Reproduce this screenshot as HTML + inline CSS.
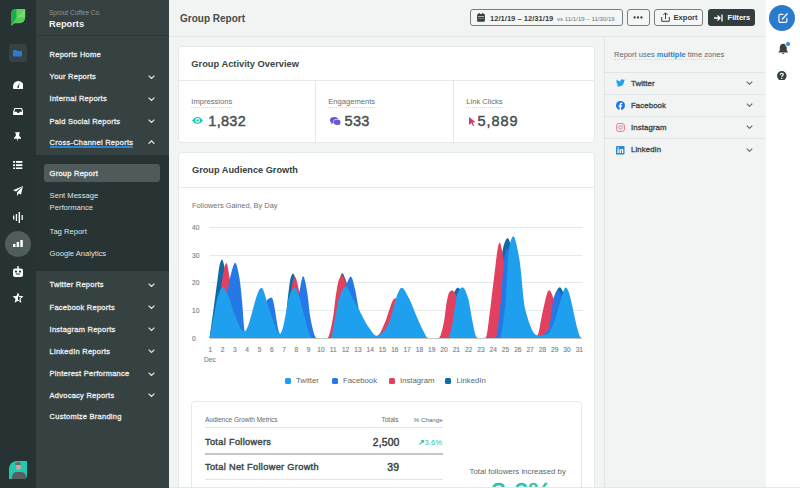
<!DOCTYPE html>
<html><head><meta charset="utf-8">
<style>
*{margin:0;padding:0;box-sizing:border-box}
html,body{width:800px;height:488px;overflow:hidden;background:#f2f3f3;font-family:"Liberation Sans",sans-serif;}
.a{position:absolute;white-space:nowrap}
#rail{position:absolute;left:0;top:0;width:36px;height:488px;background:#273232}
#nav{position:absolute;left:36px;top:0;width:133px;height:488px;background:#364141}
#sub{position:absolute;left:36px;top:155px;width:133px;height:116px;background:#283333}
.ni{position:absolute;left:13.6px;color:#e8ecec;font-weight:normal;font-size:7.5px;line-height:10px;letter-spacing:0.25px;-webkit-text-stroke:0.3px #e8ecec}
.si{position:absolute;left:13.6px;color:#dfe4e4;font-size:7.6px;line-height:12px}
.chev{position:absolute;left:111.5px;width:7px;height:4.4px}
#main{position:absolute;left:169px;top:0;width:436px;height:488px;background:#f2f3f3}
#hdr{position:absolute;left:0;top:0;width:436px;height:37px;border-bottom:1px solid #e3e6e6}
.num{top:65.6px;font-size:14.5px;font-weight:normal;letter-spacing:0.3px;color:#465151;-webkit-text-stroke:0.45px #465151}
.card{position:absolute;background:#fff;border:1px solid #e6e9e9;border-radius:4px}
#rp{position:absolute;left:604px;top:36px;width:161px;height:452px;background:#f2f3f3;border-left:1px solid #e1e4e4}
#rr{position:absolute;left:765px;top:0;width:35px;height:488px;background:#fff;border-left:1px solid #f3f4f4}
.btn{position:absolute;z-index:0;top:8.8px;height:17.5px;border:1px solid #758080;border-radius:3px;background:#f5f6f6}
.rprow{position:absolute;left:0;width:160px;height:22px;border-top:1px solid #e1e4e4}
.rplbl{position:absolute;left:26px;top:5.6px;font-weight:normal;font-size:7.8px;letter-spacing:0.1px;color:#434e4e;-webkit-text-stroke:0.35px #434e4e}
.lg{position:absolute;top:377.5px;width:6px;height:6px;border-radius:1.5px}
.lgt{position:absolute;top:375.7px;font-size:7.75px;color:#5d6868}
</style></head><body>
<div id="rail">
  <!-- logo -->
  <svg class="a" style="left:0;top:0" width="36" height="36" viewBox="0 0 36 36">
    <path d="M11.1 25.9 L11.1 14.3 Q11.1 9.1 16.3 9.1 L25.1 9.1 L25.1 17.5 Q25.1 23.2 19.4 23.2 L14.6 23.2 Z" fill="#5acb5a"/>
    <path d="M11.1 25.9 L11.1 14.3 Q11.1 9.1 16.3 9.1 L16.6 9.1 L16.6 17.6 Z" fill="#1aab4d"/>
    <path d="M16.6 9.1 L25.1 9.1 L16.6 17.6 Z" fill="#5fcf5e"/>
    <path d="M25.1 9.1 L25.1 17.6 L16.6 17.6 Z" fill="#74da6c"/>
  </svg>
  <!-- folder button -->
  <div class="a" style="left:9px;top:44px;width:18px;height:18px;border-radius:3px;background:#364141"></div>
  <svg class="a" style="left:13px;top:50px" width="9" height="6.5" viewBox="0 0 10 7.2"><path d="M0 1 Q0 0 1 0 H3.8 L4.8 1 H9 Q10 1 10 2 V6.2 Q10 7.2 9 7.2 H1 Q0 7.2 0 6.2Z" fill="#2a7bd6"/></svg>
  <!-- gauge -->
  <svg class="a" style="left:12.8px;top:80.8px" width="10.5" height="8" viewBox="0 0 12 9"><path d="M6 0 A6 6 0 0 1 12 6 V8 Q12 9 11 9 H1 Q0 9 0 8 V6 A6 6 0 0 1 6 0Z" fill="#fff"/><path d="M7.8 1.5 L6.6 6.8 L5.2 6.5Z" fill="#273232"/><circle cx="5.9" cy="6.9" r="1" fill="#273232"/></svg>
  <!-- inbox -->
  <svg class="a" style="left:12.8px;top:107.5px" width="10.4" height="7.6" viewBox="0 0 12 9"><path d="M1.5 0 H10.5 L12 4.5 V8 Q12 9 11 9 H1 Q0 9 0 8 V4.5Z" fill="#fff"/><path d="M2.3 1.3 H9.7 L10.6 4.3 H7.8 Q7.5 5.8 6 5.8 Q4.5 5.8 4.2 4.3 H1.4Z" fill="#273232"/></svg>
  <!-- pin -->
  <svg class="a" style="left:14.4px;top:132.4px" width="7" height="10" viewBox="0 0 9 12"><path d="M1.5 0 H7.5 V1.5 H6.4 L6.8 4.8 L9 7 V8.3 H5.1 L4.5 12 L3.9 8.3 H0 V7 L2.2 4.8 L2.6 1.5 H1.5Z" fill="#fff"/></svg>
  <!-- list -->
  <svg class="a" style="left:13px;top:160.5px" width="9.5" height="8.3" viewBox="0 0 10 9"><rect x="0" y="0" width="2" height="2" fill="#fff"/><rect x="3" y="0" width="7" height="2" fill="#fff"/><rect x="0" y="3.5" width="2" height="2" fill="#fff"/><rect x="3" y="3.5" width="7" height="2" fill="#fff"/><rect x="0" y="7" width="2" height="2" fill="#fff"/><rect x="3" y="7" width="7" height="2" fill="#fff"/></svg>
  <!-- send -->
  <svg class="a" style="left:13px;top:186px" width="10" height="10" viewBox="0 0 10 10"><path d="M10 0 L0 4.3 L3 5.6 L10 0 L4 6.4 V10 L5.8 7.6 L8 8.6Z" fill="#fff"/></svg>
  <!-- waveform -->
  <svg class="a" style="left:13px;top:212px" width="10" height="11" viewBox="0 0 10 11"><rect x="0" y="3.5" width="1.3" height="4" fill="#fff"/><rect x="2.8" y="2" width="1.3" height="7" fill="#fff"/><rect x="5.6" y="0" width="1.4" height="11" fill="#fff"/><rect x="8.5" y="3" width="1.3" height="5" fill="#fff"/></svg>
  <!-- bars circle -->
  <div class="a" style="left:5px;top:231px;width:26px;height:26px;border-radius:13px;background:#515d5d"></div>
  <svg class="a" style="left:13px;top:240px" width="10" height="7" viewBox="0 0 10 7"><rect x="0" y="4" width="2.5" height="3" fill="#fff"/><rect x="3.6" y="2" width="2.5" height="5" fill="#fff"/><rect x="7.3" y="0" width="2.5" height="7" fill="#fff"/></svg>
  <!-- bot -->
  <svg class="a" style="left:13px;top:266px" width="10" height="11" viewBox="0 0 10 11"><rect x="4.3" y="0" width="1.4" height="3" fill="#fff"/><rect x="0" y="2.5" width="10" height="8.5" rx="2" fill="#fff"/><circle cx="3" cy="5.6" r="1.1" fill="#273232"/><circle cx="7" cy="5.6" r="1.1" fill="#273232"/><path d="M2.8 8 H7.2" stroke="#273232" stroke-width="1"/></svg>
  <!-- star -->
  <svg class="a" style="left:12px;top:292px" width="12" height="12" viewBox="0 0 12 12"><path d="M6 0.5 L7.6 4 L11.5 4.3 L8.5 6.9 L9.4 10.8 L6 8.8 L2.6 10.8 L3.5 6.9 L0.5 4.3 L4.4 4Z" fill="#fff"/><path d="M6 3 L6.9 5.1 L9 5.3 L7.4 6.7 L7.9 8.9 L6 7.7Z" fill="#273232"/></svg>
  <!-- avatar -->
  <div class="a" style="left:9px;top:461px;width:18px;height:18px;background:#22c9b2;border-radius:8px 0 4px 0;overflow:hidden">
    <div class="a" style="left:2.5px;top:10.5px;width:14px;height:10px;border-radius:5px 5px 0 0;background:#5a5f5d"></div>
    <div class="a" style="left:6.6px;top:1.6px;width:5.6px;height:7px;border-radius:2.8px;background:#c3aaa0"></div>
    <div class="a" style="left:6.4px;top:1.2px;width:6px;height:2.4px;border-radius:3px 3px 0 0;background:#6d6a66"></div>
  </div>
</div>

<div id="nav">
  <div class="a" style="left:13px;top:8.5px;font-size:6.5px;color:#8d9797">Sprout Coffee Co.</div>
  <div class="a" style="left:13px;top:18.5px;font-size:9.3px;font-weight:bold;color:#f4f6f6">Reports</div>
  <div class="a" style="left:0;top:34.5px;width:133px;height:1px;background:#2d3838"></div>
  <div class="ni" style="top:49.6px">Reports Home</div>
  <div class="ni" style="top:72.2px">Your Reports</div>
  <div class="ni" style="top:94.4px">Internal Reports</div>
  <div class="ni" style="top:116.6px">Paid Social Reports</div>
  <div class="ni" style="top:137.6px">Cross-Channel Reports</div>
  <div class="a" style="left:13.6px;top:146.4px;width:83px;height:1.4px;background:#2f82cc"></div>
  <svg class="chev" style="top:74.7px" viewBox="0 0 7 4.4"><path d="M0.6 0.6 L3.5 3.5 L6.4 0.6" stroke="#e3e8e8" fill="none" stroke-width="1.2"/></svg>
  <svg class="chev" style="top:96.8px" viewBox="0 0 7 4.4"><path d="M0.6 0.6 L3.5 3.5 L6.4 0.6" stroke="#e3e8e8" fill="none" stroke-width="1.2"/></svg>
  <svg class="chev" style="top:119px" viewBox="0 0 7 4.4"><path d="M0.6 0.6 L3.5 3.5 L6.4 0.6" stroke="#e3e8e8" fill="none" stroke-width="1.2"/></svg>
  <svg class="chev" style="top:140px" viewBox="0 0 7 4.4"><path d="M0.6 3.8 L3.5 0.9 L6.4 3.8" stroke="#e3e8e8" fill="none" stroke-width="1.2"/></svg>

  <div class="ni" style="top:280.4px">Twitter Reports</div>
  <div class="ni" style="top:302.5px">Facebook Reports</div>
  <div class="ni" style="top:324.8px">Instagram Reports</div>
  <div class="ni" style="top:347px">LinkedIn Reports</div>
  <div class="ni" style="top:369.2px">Pinterest Performance</div>
  <div class="ni" style="top:390.6px">Advocacy Reports</div>
  <div class="ni" style="top:411.8px">Customize Branding</div>
  <svg class="chev" style="top:282.7px" viewBox="0 0 7 4.4"><path d="M0.6 0.6 L3.5 3.5 L6.4 0.6" stroke="#e3e8e8" fill="none" stroke-width="1.2"/></svg>
  <svg class="chev" style="top:304.9px" viewBox="0 0 7 4.4"><path d="M0.6 0.6 L3.5 3.5 L6.4 0.6" stroke="#e3e8e8" fill="none" stroke-width="1.2"/></svg>
  <svg class="chev" style="top:327.2px" viewBox="0 0 7 4.4"><path d="M0.6 0.6 L3.5 3.5 L6.4 0.6" stroke="#e3e8e8" fill="none" stroke-width="1.2"/></svg>
  <svg class="chev" style="top:349.4px" viewBox="0 0 7 4.4"><path d="M0.6 0.6 L3.5 3.5 L6.4 0.6" stroke="#e3e8e8" fill="none" stroke-width="1.2"/></svg>
  <svg class="chev" style="top:371.6px" viewBox="0 0 7 4.4"><path d="M0.6 0.6 L3.5 3.5 L6.4 0.6" stroke="#e3e8e8" fill="none" stroke-width="1.2"/></svg>
  <svg class="chev" style="top:393px" viewBox="0 0 7 4.4"><path d="M0.6 0.6 L3.5 3.5 L6.4 0.6" stroke="#e3e8e8" fill="none" stroke-width="1.2"/></svg>
</div>
<div id="sub">
  <div class="a" style="left:8.4px;top:9.3px;width:115.5px;height:17.3px;border-radius:3px;background:#4f5b5b"></div>
  <div class="ni" style="top:13.6px;color:#fff">Group Report</div>
  <div class="si" style="top:35.4px">Sent Message</div>
  <div class="si" style="top:47.4px">Performance</div>
  <div class="si" style="top:70.8px">Tag Report</div>
  <div class="si" style="top:92.8px">Google Analytics</div>
</div>

<div id="main">
  <div id="hdr">
    <div class="a" style="left:11px;top:12.9px;font-size:10px;font-weight:bold;color:#434d4d">Group Report</div>
  </div>
  <!-- card 1 -->
  <div class="card" style="left:9px;top:46px;width:417px;height:97px">
    <div class="a" style="left:12.3px;top:12px;font-size:9.3px;font-weight:bold;color:#3a4545">Group Activity Overview</div>
    <div class="a" style="left:0;top:33px;width:415px;height:1px;background:#e6e9e9"></div>
    <div class="a" style="left:136px;top:34px;width:1px;height:61px;background:#e6e9e9"></div>
    <div class="a" style="left:274px;top:34px;width:1px;height:61px;background:#e6e9e9"></div>
    <div class="a" style="left:12.3px;top:50px;font-size:7.6px;color:#667070;border-bottom:1px dotted #d3d8d8;padding-bottom:1px">Impressions</div>
    <div class="a" style="left:149.3px;top:50px;font-size:7.6px;color:#667070;border-bottom:1px dotted #d3d8d8;padding-bottom:1px">Engagements</div>
    <div class="a" style="left:287.3px;top:50px;font-size:7.6px;color:#667070;border-bottom:1px dotted #d3d8d8;padding-bottom:1px">Link Clicks</div>
    <svg class="a" style="left:13.3px;top:69.2px" width="11" height="8.8" viewBox="0 0 10 8"><path d="M0 4 Q5 -2.6 10 4 Q5 10.6 0 4Z" fill="#27c1b3"/><circle cx="5" cy="4" r="2.1" fill="#fff"/><circle cx="5" cy="4" r="1.1" fill="#27c1b3"/></svg>
    <div class="a num" style="left:29.3px">1,832</div>
    <svg class="a" style="left:151px;top:70.2px" width="10.8" height="8.5" viewBox="0 0 11 8.5"><ellipse cx="4.2" cy="3.2" rx="4.2" ry="3.2" fill="#6b58d3"/><path d="M1 5.5 L0.8 7 L2.8 6Z" fill="#6b58d3"/><ellipse cx="7.2" cy="5" rx="3.9" ry="3" fill="#fff"/><ellipse cx="7.2" cy="5.2" rx="3.5" ry="2.8" fill="#6b58d3"/><path d="M9.5 7 L10.3 8.4 L8.2 7.6Z" fill="#6b58d3"/></svg>
    <div class="a num" style="left:165.6px">533</div>
    <svg class="a" style="left:289.5px;top:69.5px" width="6.5" height="9.5" viewBox="0 0 7 10"><path d="M0 0 L7 5.5 L4 5.8 L5.5 9.3 L4.3 9.8 L2.8 6.3 L0 8.5Z" fill="#d9356b"/></svg>
    <div class="a num" style="left:298.6px;letter-spacing:0.9px">5,889</div>
  </div>
  <!-- card 2 -->
  <div class="card" style="left:9px;top:152px;width:417px;height:360px">
    <div class="a" style="left:13px;top:12px;font-size:9.2px;font-weight:bold;color:#364141">Group Audience Growth</div>
    <div class="a" style="left:0;top:34px;width:415px;height:1px;background:#e6e9e9"></div>
    <div class="a" style="left:13px;top:48.4px;font-size:7.4px;color:#6a7474">Followers Gained, By Day</div>
  </div>
</div>

<!-- chart svg in page coords -->
<svg class="a" style="left:0;top:0" width="800" height="488" viewBox="0 0 800 488">
  <g stroke="#e6e9e9" stroke-width="1">
    <line x1="209.5" y1="227.5" x2="582.5" y2="227.5"/>
    <line x1="209.5" y1="255.5" x2="582.5" y2="255.5"/>
    <line x1="209.5" y1="282.5" x2="582.5" y2="282.5"/>
    <line x1="209.5" y1="310.5" x2="582.5" y2="310.5"/>
  </g>
  <g font-family="Liberation Sans" font-size="6.6" fill="#7d8787" stroke="#7d8787" stroke-width="0.15">
    <text x="192" y="230">40</text><text x="192" y="257.8">30</text><text x="192" y="285.3">20</text><text x="192" y="313">10</text><text x="192" y="340.6">0</text>
  </g>
  <line x1="209.5" y1="338.5" x2="582.5" y2="338.5" stroke="#bfc5c5" stroke-width="1"/>
  <path d="M209.5 338.0 L209.5 338.00 L210.5 330.89 L211.5 323.81 L212.5 316.69 L213.5 309.49 L214.5 302.09 L215.5 294.47 L216.5 286.90 L217.5 279.65 L218.5 271.87 L219.5 265.32 L220.5 261.91 L221.5 259.74 L222.5 259.82 L223.5 262.70 L224.5 267.33 L225.5 272.55 L226.5 277.56 L227.5 283.88 L228.5 291.40 L229.5 299.64 L230.5 308.14 L231.5 316.40 L232.5 323.96 L233.5 330.34 L234.5 335.06 L235.5 337.65 L236.5 338.00 L237.5 338.00 L238.5 338.00 L239.5 338.00 L240.5 338.00 L241.5 338.00 L242.5 338.00 L243.5 338.00 L244.5 338.00 L245.5 338.00 L246.5 338.00 L247.5 338.00 L248.5 338.00 L249.5 338.00 L250.5 338.00 L251.5 338.00 L252.5 338.00 L253.5 338.00 L254.5 338.00 L255.5 338.00 L256.5 338.00 L257.5 338.00 L258.5 338.00 L259.5 338.00 L260.5 338.00 L261.5 338.00 L262.5 338.00 L263.5 338.00 L264.5 338.00 L265.5 338.00 L266.5 338.00 L267.5 338.00 L268.5 338.00 L269.5 338.00 L270.5 338.00 L271.5 338.00 L272.5 338.00 L273.5 338.00 L274.5 338.00 L275.5 338.00 L276.5 338.00 L277.5 338.00 L278.5 338.00 L279.5 338.00 L280.5 338.00 L281.5 338.00 L282.5 338.00 L283.5 338.00 L284.5 333.82 L285.5 323.74 L286.5 311.41 L287.5 300.49 L288.5 292.16 L289.5 284.11 L290.5 278.29 L291.5 275.58 L292.5 273.84 L293.5 273.69 L294.5 275.62 L295.5 278.98 L296.5 283.00 L297.5 287.31 L298.5 293.76 L299.5 301.91 L300.5 310.89 L301.5 319.81 L302.5 327.81 L303.5 334.00 L304.5 337.52 L305.5 338.00 L306.5 338.00 L307.5 338.00 L308.5 338.00 L309.5 338.00 L310.5 338.00 L311.5 338.00 L312.5 338.00 L313.5 338.00 L314.5 338.00 L315.5 338.00 L316.5 338.00 L317.5 338.00 L318.5 338.00 L319.5 338.00 L320.5 338.00 L321.5 338.00 L322.5 338.00 L323.5 338.00 L324.5 338.00 L325.5 338.00 L326.5 338.00 L327.5 338.00 L328.5 338.00 L329.5 338.00 L330.5 338.00 L331.5 337.47 L332.5 333.63 L333.5 326.95 L334.5 318.50 L335.5 309.30 L336.5 300.43 L337.5 292.91 L338.5 287.30 L339.5 281.61 L340.5 276.57 L341.5 273.45 L342.5 273.20 L343.5 274.58 L344.5 276.89 L345.5 279.62 L346.5 282.57 L347.5 286.91 L348.5 292.52 L349.5 299.03 L350.5 306.06 L351.5 313.21 L352.5 320.12 L353.5 326.41 L354.5 331.69 L355.5 335.59 L356.5 337.72 L357.5 338.00 L358.5 338.00 L359.5 338.00 L360.5 338.00 L361.5 338.00 L362.5 338.00 L363.5 338.00 L364.5 338.00 L365.5 338.00 L366.5 338.00 L367.5 338.00 L368.5 338.00 L369.5 338.00 L370.5 338.00 L371.5 338.00 L372.5 338.00 L373.5 338.00 L374.5 338.00 L375.5 338.00 L376.5 338.00 L377.5 338.00 L378.5 338.00 L379.5 338.00 L380.5 338.00 L381.5 338.00 L382.5 338.00 L383.5 338.00 L384.5 338.00 L385.5 338.00 L386.5 338.00 L387.5 338.00 L388.5 338.00 L389.5 338.00 L390.5 338.00 L391.5 338.00 L392.5 338.00 L393.5 338.00 L394.5 338.00 L395.5 338.00 L396.5 338.00 L397.5 338.00 L398.5 338.00 L399.5 338.00 L400.5 338.00 L401.5 338.00 L402.5 338.00 L403.5 338.00 L404.5 338.00 L405.5 338.00 L406.5 338.00 L407.5 338.00 L408.5 338.00 L409.5 338.00 L410.5 338.00 L411.5 338.00 L412.5 338.00 L413.5 338.00 L414.5 338.00 L415.5 338.00 L416.5 338.00 L417.5 338.00 L418.5 338.00 L419.5 338.00 L420.5 338.00 L421.5 338.00 L422.5 338.00 L423.5 338.00 L424.5 338.00 L425.5 338.00 L426.5 338.00 L427.5 338.00 L428.5 338.00 L429.5 338.00 L430.5 338.00 L431.5 338.00 L432.5 338.00 L433.5 338.00 L434.5 338.00 L435.5 338.00 L436.5 338.00 L437.5 338.00 L438.5 338.00 L439.5 338.00 L440.5 338.00 L441.5 338.00 L442.5 338.00 L443.5 338.00 L444.5 338.00 L445.5 338.00 L446.5 337.45 L447.5 333.50 L448.5 326.77 L449.5 318.50 L450.5 309.89 L451.5 302.19 L452.5 296.61 L453.5 293.87 L454.5 291.75 L455.5 289.92 L456.5 288.56 L457.5 287.80 L458.5 287.82 L459.5 288.69 L460.5 290.18 L461.5 292.03 L462.5 294.27 L463.5 298.36 L464.5 304.03 L465.5 310.67 L466.5 317.69 L467.5 324.50 L468.5 330.49 L469.5 335.07 L470.5 337.65 L471.5 338.00 L472.5 338.00 L473.5 338.00 L474.5 338.00 L475.5 338.00 L476.5 338.00 L477.5 338.00 L478.5 338.00 L479.5 338.00 L480.5 338.00 L481.5 338.00 L482.5 338.00 L483.5 338.00 L484.5 338.00 L485.5 338.00 L486.5 338.00 L487.5 338.00 L488.5 338.00 L489.5 338.00 L490.5 337.70 L491.5 335.45 L492.5 331.23 L493.5 325.38 L494.5 318.21 L495.5 310.02 L496.5 301.15 L497.5 291.89 L498.5 282.58 L499.5 273.51 L500.5 265.02 L501.5 257.41 L502.5 251.00 L503.5 246.11 L504.5 243.00 L505.5 240.57 L506.5 238.67 L507.5 237.90 L508.5 238.78 L509.5 241.09 L510.5 244.35 L511.5 248.10 L512.5 252.24 L513.5 258.67 L514.5 267.19 L515.5 277.18 L516.5 288.05 L517.5 299.17 L518.5 309.96 L519.5 319.80 L520.5 328.08 L521.5 334.20 L522.5 337.55 L523.5 338.00 L524.5 338.00 L525.5 338.00 L526.5 338.00 L527.5 338.00 L528.5 338.00 L529.5 338.00 L530.5 338.00 L531.5 338.00 L532.5 338.00 L533.5 338.00 L534.5 338.00 L535.5 338.00 L536.5 338.00 L537.5 338.00 L538.5 338.00 L539.5 338.00 L540.5 338.00 L541.5 338.00 L542.5 338.00 L543.5 338.00 L544.5 338.00 L545.5 337.73 L546.5 335.77 L547.5 332.28 L548.5 327.73 L549.5 322.56 L550.5 317.25 L551.5 312.24 L552.5 307.70 L553.5 302.50 L554.5 297.35 L555.5 293.29 L556.5 291.03 L557.5 289.27 L558.5 287.93 L559.5 287.24 L560.5 287.54 L561.5 288.94 L562.5 290.94 L563.5 293.27 L564.5 297.05 L565.5 302.11 L566.5 308.04 L567.5 314.39 L568.5 320.76 L569.5 326.70 L570.5 331.79 L571.5 335.60 L572.5 337.72 L573.5 338.00 L574.5 338.00 L575.5 338.00 L576.5 338.00 L577.5 338.00 L578.5 338.00 L579.5 338.00 L580.5 338.00 L581.5 338.00 L582.5 338.00 L582.5 338.0 Z" fill="#0f6aa6"/>
  <path d="M209.5 338.0 L209.5 338.00 L210.5 338.00 L211.5 338.00 L212.5 337.74 L213.5 335.78 L214.5 332.14 L215.5 327.11 L216.5 320.97 L217.5 314.03 L218.5 306.56 L219.5 298.86 L220.5 291.21 L221.5 283.92 L222.5 277.26 L223.5 271.53 L224.5 267.02 L225.5 264.02 L226.5 262.81 L227.5 265.23 L228.5 271.39 L229.5 277.60 L230.5 282.92 L231.5 288.79 L232.5 295.02 L233.5 301.43 L234.5 307.85 L235.5 314.09 L236.5 319.98 L237.5 325.33 L238.5 329.97 L239.5 333.72 L240.5 336.39 L241.5 337.81 L242.5 338.00 L243.5 338.00 L244.5 338.00 L245.5 338.00 L246.5 338.00 L247.5 338.00 L248.5 338.00 L249.5 338.00 L250.5 338.00 L251.5 338.00 L252.5 338.00 L253.5 338.00 L254.5 338.00 L255.5 338.00 L256.5 338.00 L257.5 338.00 L258.5 338.00 L259.5 338.00 L260.5 338.00 L261.5 338.00 L262.5 338.00 L263.5 338.00 L264.5 338.00 L265.5 338.00 L266.5 338.00 L267.5 338.00 L268.5 338.00 L269.5 338.00 L270.5 338.00 L271.5 338.00 L272.5 338.00 L273.5 338.00 L274.5 338.00 L275.5 338.00 L276.5 338.00 L277.5 338.00 L278.5 338.00 L279.5 338.00 L280.5 338.00 L281.5 338.00 L282.5 338.00 L283.5 338.00 L284.5 337.60 L285.5 334.65 L286.5 329.35 L287.5 322.31 L288.5 314.16 L289.5 305.51 L290.5 296.99 L291.5 289.20 L292.5 282.78 L293.5 278.35 L294.5 276.52 L295.5 277.36 L296.5 279.99 L297.5 283.78 L298.5 288.14 L299.5 292.63 L300.5 299.30 L301.5 307.94 L302.5 317.30 L303.5 326.15 L304.5 333.27 L305.5 337.42 L306.5 338.00 L307.5 338.00 L308.5 338.00 L309.5 338.00 L310.5 338.00 L311.5 338.00 L312.5 338.00 L313.5 338.00 L314.5 338.00 L315.5 338.00 L316.5 338.00 L317.5 338.00 L318.5 338.00 L319.5 338.00 L320.5 338.00 L321.5 338.00 L322.5 338.00 L323.5 338.00 L324.5 338.00 L325.5 338.00 L326.5 338.00 L327.5 337.99 L328.5 336.83 L329.5 334.06 L330.5 330.10 L331.5 325.37 L332.5 320.32 L333.5 314.34 L334.5 306.00 L335.5 297.82 L336.5 291.37 L337.5 285.34 L338.5 280.76 L339.5 278.25 L340.5 276.32 L341.5 275.16 L342.5 275.21 L343.5 276.69 L344.5 279.10 L345.5 281.88 L346.5 284.98 L347.5 289.42 L348.5 294.97 L349.5 301.28 L350.5 308.00 L351.5 314.79 L352.5 321.30 L353.5 327.20 L354.5 332.13 L355.5 335.76 L356.5 337.74 L357.5 338.00 L358.5 337.99 L359.5 337.97 L360.5 337.95 L361.5 337.91 L362.5 337.87 L363.5 337.81 L364.5 337.75 L365.5 337.67 L366.5 337.59 L367.5 337.49 L368.5 337.38 L369.5 337.26 L370.5 337.13 L371.5 336.99 L372.5 336.84 L373.5 336.68 L374.5 336.50 L375.5 336.31 L376.5 336.11 L377.5 335.82 L378.5 335.05 L379.5 333.82 L380.5 332.19 L381.5 330.27 L382.5 328.13 L383.5 325.85 L384.5 323.53 L385.5 321.23 L386.5 318.47 L387.5 315.28 L388.5 312.06 L389.5 309.15 L390.5 306.20 L391.5 303.30 L392.5 300.92 L393.5 299.49 L394.5 298.60 L395.5 298.33 L396.5 299.34 L397.5 301.10 L398.5 302.94 L399.5 305.33 L400.5 308.27 L401.5 311.61 L402.5 315.24 L403.5 319.00 L404.5 322.77 L405.5 326.41 L406.5 329.78 L407.5 332.75 L408.5 335.18 L409.5 336.93 L410.5 337.88 L411.5 338.00 L412.5 338.00 L413.5 338.00 L414.5 338.00 L415.5 338.00 L416.5 338.00 L417.5 338.00 L418.5 338.00 L419.5 338.00 L420.5 338.00 L421.5 338.00 L422.5 338.00 L423.5 338.00 L424.5 338.00 L425.5 338.00 L426.5 338.00 L427.5 338.00 L428.5 338.00 L429.5 338.00 L430.5 338.00 L431.5 338.00 L432.5 338.00 L433.5 338.00 L434.5 338.00 L435.5 338.00 L436.5 338.00 L437.5 338.00 L438.5 338.00 L439.5 337.46 L440.5 335.47 L441.5 332.33 L442.5 328.39 L443.5 323.97 L444.5 318.75 L445.5 310.49 L446.5 302.78 L447.5 297.93 L448.5 294.07 L449.5 292.06 L450.5 291.01 L451.5 290.39 L452.5 290.41 L453.5 291.19 L454.5 292.51 L455.5 294.14 L456.5 296.08 L457.5 299.46 L458.5 304.12 L459.5 309.64 L460.5 315.61 L461.5 321.61 L462.5 327.24 L463.5 332.08 L464.5 335.71 L465.5 337.73 L466.5 338.00 L467.5 338.00 L468.5 338.00 L469.5 338.00 L470.5 338.00 L471.5 338.00 L472.5 338.00 L473.5 338.00 L474.5 338.00 L475.5 338.00 L476.5 338.00 L477.5 338.00 L478.5 338.00 L479.5 338.00 L480.5 338.00 L481.5 338.00 L482.5 338.00 L483.5 338.00 L484.5 338.00 L485.5 338.00 L486.5 336.12 L487.5 330.56 L488.5 322.86 L489.5 314.59 L490.5 307.00 L491.5 298.62 L492.5 289.86 L493.5 281.80 L494.5 273.83 L495.5 265.23 L496.5 256.89 L497.5 249.71 L498.5 244.59 L499.5 242.42 L500.5 243.81 L501.5 247.89 L502.5 253.33 L503.5 258.80 L504.5 264.28 L505.5 270.96 L506.5 278.55 L507.5 286.75 L508.5 295.25 L509.5 303.75 L510.5 311.94 L511.5 319.53 L512.5 326.21 L513.5 331.67 L514.5 335.61 L515.5 337.72 L516.5 338.00 L517.5 337.99 L518.5 337.98 L519.5 337.96 L520.5 337.92 L521.5 337.88 L522.5 337.83 L523.5 337.77 L524.5 337.70 L525.5 337.61 L526.5 337.51 L527.5 337.40 L528.5 337.27 L529.5 337.13 L530.5 336.97 L531.5 336.80 L532.5 336.61 L533.5 336.40 L534.5 336.17 L535.5 335.92 L536.5 335.66 L537.5 335.35 L538.5 333.10 L539.5 328.47 L540.5 322.68 L541.5 316.94 L542.5 312.40 L543.5 308.11 L544.5 303.57 L545.5 299.16 L546.5 295.25 L547.5 292.21 L548.5 290.42 L549.5 290.21 L550.5 291.30 L551.5 293.25 L552.5 295.71 L553.5 298.71 L554.5 304.24 L555.5 311.63 L556.5 319.76 L557.5 327.53 L558.5 333.81 L559.5 337.49 L560.5 338.00 L561.5 338.00 L562.5 338.00 L563.5 338.00 L564.5 338.00 L565.5 338.00 L566.5 338.00 L567.5 338.00 L568.5 338.00 L569.5 338.00 L570.5 338.00 L571.5 338.00 L572.5 338.00 L573.5 338.00 L574.5 338.00 L575.5 338.00 L576.5 338.00 L577.5 338.00 L578.5 338.00 L579.5 338.00 L580.5 338.00 L581.5 338.00 L582.5 338.00 L582.5 338.0 Z" fill="#e2405f"/>
  <path d="M209.5 338.0 L209.5 338.00 L210.5 338.00 L211.5 338.00 L212.5 338.00 L213.5 338.00 L214.5 338.00 L215.5 338.00 L216.5 338.00 L217.5 338.00 L218.5 338.00 L219.5 338.00 L220.5 337.65 L221.5 335.03 L222.5 330.29 L223.5 323.91 L224.5 316.41 L225.5 308.30 L226.5 300.06 L227.5 292.21 L228.5 285.26 L229.5 279.70 L230.5 275.72 L231.5 271.88 L232.5 268.26 L233.5 265.28 L234.5 263.33 L235.5 262.86 L236.5 264.59 L237.5 268.20 L238.5 272.89 L239.5 278.17 L240.5 285.87 L241.5 295.57 L242.5 306.22 L243.5 321.22 L244.5 331.70 L245.5 331.56 L246.5 331.17 L247.5 330.54 L248.5 329.70 L249.5 328.66 L250.5 327.44 L251.5 326.07 L252.5 324.56 L253.5 322.94 L254.5 321.23 L255.5 319.44 L256.5 317.60 L257.5 315.73 L258.5 313.85 L259.5 311.97 L260.5 310.12 L261.5 308.32 L262.5 306.59 L263.5 304.95 L264.5 303.42 L265.5 302.02 L266.5 300.77 L267.5 299.69 L268.5 298.81 L269.5 298.14 L270.5 297.69 L271.5 297.51 L272.5 298.45 L273.5 301.91 L274.5 307.16 L275.5 313.45 L276.5 320.00 L277.5 326.06 L278.5 330.85 L279.5 333.62 L280.5 333.95 L281.5 333.60 L282.5 332.91 L283.5 331.91 L284.5 330.62 L285.5 329.06 L286.5 327.26 L287.5 325.23 L288.5 322.99 L289.5 320.57 L290.5 317.99 L291.5 315.27 L292.5 312.44 L293.5 309.50 L294.5 306.50 L295.5 303.43 L296.5 300.34 L297.5 297.24 L298.5 294.15 L299.5 290.95 L300.5 286.12 L301.5 280.75 L302.5 276.87 L303.5 276.33 L304.5 278.70 L305.5 283.02 L306.5 288.57 L307.5 294.60 L308.5 302.45 L309.5 312.27 L310.5 318.42 L311.5 323.48 L312.5 328.12 L313.5 332.11 L314.5 335.23 L315.5 337.27 L316.5 338.00 L317.5 338.00 L318.5 338.00 L319.5 338.00 L320.5 338.00 L321.5 338.00 L322.5 338.00 L323.5 338.00 L324.5 338.00 L325.5 338.00 L326.5 338.00 L327.5 338.00 L328.5 338.00 L329.5 338.00 L330.5 338.00 L331.5 338.00 L332.5 338.00 L333.5 337.76 L334.5 335.96 L335.5 332.69 L336.5 328.31 L337.5 323.16 L338.5 317.61 L339.5 311.99 L340.5 306.67 L341.5 301.99 L342.5 298.13 L343.5 294.31 L344.5 290.56 L345.5 287.08 L346.5 284.06 L347.5 281.69 L348.5 279.57 L349.5 277.71 L350.5 276.61 L351.5 276.94 L352.5 279.27 L353.5 282.93 L354.5 287.14 L355.5 291.34 L356.5 296.75 L357.5 302.70 L358.5 307.96 L359.5 311.80 L360.5 315.48 L361.5 319.11 L362.5 322.62 L363.5 325.95 L364.5 329.01 L365.5 331.74 L366.5 334.07 L367.5 335.92 L368.5 337.22 L369.5 337.91 L370.5 338.00 L371.5 338.00 L372.5 338.00 L373.5 338.00 L374.5 338.00 L375.5 338.00 L376.5 338.00 L377.5 338.00 L378.5 338.00 L379.5 338.00 L380.5 338.00 L381.5 338.00 L382.5 338.00 L383.5 338.00 L384.5 338.00 L385.5 338.00 L386.5 338.00 L387.5 338.00 L388.5 338.00 L389.5 338.00 L390.5 338.00 L391.5 338.00 L392.5 338.00 L393.5 338.00 L394.5 338.00 L395.5 338.00 L396.5 338.00 L397.5 338.00 L398.5 338.00 L399.5 338.00 L400.5 338.00 L401.5 338.00 L402.5 338.00 L403.5 338.00 L404.5 338.00 L405.5 338.00 L406.5 338.00 L407.5 338.00 L408.5 338.00 L409.5 338.00 L410.5 338.00 L411.5 338.00 L412.5 338.00 L413.5 338.00 L414.5 338.00 L415.5 338.00 L416.5 338.00 L417.5 338.00 L418.5 338.00 L419.5 338.00 L420.5 338.00 L421.5 338.00 L422.5 338.00 L423.5 338.00 L424.5 338.00 L425.5 338.00 L426.5 338.00 L427.5 338.00 L428.5 338.00 L429.5 338.00 L430.5 338.00 L431.5 338.00 L432.5 338.00 L433.5 338.00 L434.5 338.00 L435.5 338.00 L436.5 338.00 L437.5 338.00 L438.5 338.00 L439.5 338.00 L440.5 338.00 L441.5 338.00 L442.5 338.00 L443.5 338.00 L444.5 338.00 L445.5 338.00 L446.5 338.00 L447.5 338.00 L448.5 338.00 L449.5 337.81 L450.5 336.34 L451.5 333.65 L452.5 329.97 L453.5 325.56 L454.5 320.65 L455.5 315.50 L456.5 310.35 L457.5 305.44 L458.5 301.03 L459.5 297.35 L460.5 294.66 L461.5 293.19 L462.5 293.23 L463.5 294.93 L464.5 298.05 L465.5 302.25 L466.5 307.24 L467.5 312.69 L468.5 318.31 L469.5 323.76 L470.5 328.75 L471.5 332.95 L472.5 336.07 L473.5 337.77 L474.5 338.00 L475.5 338.00 L476.5 338.00 L477.5 338.00 L478.5 338.00 L479.5 338.00 L480.5 338.00 L481.5 338.00 L482.5 338.00 L483.5 338.00 L484.5 338.00 L485.5 338.00 L486.5 338.00 L487.5 338.00 L488.5 338.00 L489.5 338.00 L490.5 338.00 L491.5 338.00 L492.5 338.00 L493.5 338.00 L494.5 338.00 L495.5 338.00 L496.5 335.77 L497.5 329.97 L498.5 321.97 L499.5 313.12 L500.5 303.93 L501.5 291.30 L502.5 277.37 L503.5 265.17 L504.5 257.41 L505.5 251.62 L506.5 249.00 L507.5 249.55 L508.5 251.03 L509.5 253.20 L510.5 255.81 L511.5 258.61 L512.5 261.57 L513.5 265.79 L514.5 271.22 L515.5 277.61 L516.5 284.70 L517.5 292.24 L518.5 299.97 L519.5 307.62 L520.5 314.96 L521.5 321.71 L522.5 327.62 L523.5 332.44 L524.5 335.90 L525.5 337.76 L526.5 338.00 L527.5 338.00 L528.5 338.00 L529.5 338.00 L530.5 338.00 L531.5 338.00 L532.5 338.00 L533.5 338.00 L534.5 338.00 L535.5 338.00 L536.5 338.00 L537.5 337.97 L538.5 337.75 L539.5 337.36 L540.5 336.82 L541.5 336.19 L542.5 335.50 L543.5 334.80 L544.5 334.09 L545.5 333.28 L546.5 332.27 L547.5 330.94 L548.5 329.20 L549.5 325.40 L550.5 319.47 L551.5 312.55 L552.5 303.79 L553.5 298.21 L554.5 295.54 L555.5 293.30 L556.5 291.58 L557.5 290.45 L558.5 290.00 L559.5 290.62 L560.5 292.62 L561.5 295.77 L562.5 299.83 L563.5 304.56 L564.5 309.72 L565.5 315.07 L566.5 320.38 L567.5 325.40 L568.5 329.89 L569.5 333.61 L570.5 336.33 L571.5 337.80 L572.5 338.00 L573.5 338.00 L574.5 338.00 L575.5 338.00 L576.5 338.00 L577.5 338.00 L578.5 338.00 L579.5 338.00 L580.5 338.00 L581.5 338.00 L582.5 338.00 L582.5 338.0 Z" fill="#2479e6"/>
  <path d="M209.5 338.0 L209.5 338.00 L210.5 332.85 L211.5 327.67 L212.5 322.53 L213.5 317.49 L214.5 312.38 L215.5 306.90 L216.5 301.66 L217.5 297.29 L218.5 294.35 L219.5 291.92 L220.5 289.78 L221.5 288.15 L222.5 287.28 L223.5 287.37 L224.5 288.35 L225.5 289.98 L226.5 292.05 L227.5 294.32 L228.5 296.58 L229.5 299.04 L230.5 302.06 L231.5 305.34 L232.5 308.58 L233.5 311.50 L234.5 313.95 L235.5 316.48 L236.5 319.06 L237.5 321.61 L238.5 324.05 L239.5 326.30 L240.5 328.26 L241.5 329.86 L242.5 331.00 L243.5 331.62 L244.5 331.59 L245.5 330.79 L246.5 329.27 L247.5 327.13 L248.5 324.48 L249.5 321.42 L250.5 318.03 L251.5 314.42 L252.5 310.69 L253.5 306.93 L254.5 303.25 L255.5 299.74 L256.5 296.50 L257.5 293.63 L258.5 291.23 L259.5 289.39 L260.5 288.21 L261.5 287.80 L262.5 288.53 L263.5 290.51 L264.5 293.39 L265.5 296.83 L266.5 300.51 L267.5 304.08 L268.5 307.20 L269.5 309.85 L270.5 312.72 L271.5 315.76 L272.5 318.85 L273.5 321.91 L274.5 324.84 L275.5 327.53 L276.5 329.88 L277.5 331.79 L278.5 333.17 L279.5 333.90 L280.5 333.69 L281.5 331.72 L282.5 329.04 L283.5 325.23 L284.5 320.28 L285.5 314.88 L286.5 309.59 L287.5 303.67 L288.5 298.80 L289.5 295.61 L290.5 293.07 L291.5 291.20 L292.5 289.66 L293.5 288.32 L294.5 287.46 L295.5 287.46 L296.5 288.97 L297.5 291.47 L298.5 294.20 L299.5 297.31 L300.5 301.14 L301.5 305.26 L302.5 309.22 L303.5 312.74 L304.5 316.51 L305.5 320.48 L306.5 324.48 L307.5 328.29 L308.5 331.73 L309.5 334.60 L310.5 336.70 L311.5 337.85 L312.5 338.00 L313.5 338.00 L314.5 338.00 L315.5 338.00 L316.5 338.00 L317.5 338.00 L318.5 338.00 L319.5 338.00 L320.5 338.00 L321.5 338.00 L322.5 338.00 L323.5 338.00 L324.5 338.00 L325.5 338.00 L326.5 338.00 L327.5 338.00 L328.5 338.00 L329.5 338.00 L330.5 338.00 L331.5 336.50 L332.5 332.62 L333.5 327.25 L334.5 321.30 L335.5 315.69 L336.5 310.61 L337.5 305.11 L338.5 300.27 L339.5 296.93 L340.5 294.17 L341.5 291.86 L342.5 290.05 L343.5 288.59 L344.5 287.29 L345.5 286.55 L346.5 286.73 L347.5 287.77 L348.5 289.44 L349.5 291.54 L350.5 293.85 L351.5 296.15 L352.5 298.25 L353.5 300.05 L354.5 301.84 L355.5 303.63 L356.5 305.43 L357.5 307.24 L358.5 309.04 L359.5 310.84 L360.5 312.67 L361.5 314.57 L362.5 316.50 L363.5 318.44 L364.5 320.35 L365.5 322.18 L366.5 323.91 L367.5 325.49 L368.5 326.92 L369.5 328.37 L370.5 329.87 L371.5 331.35 L372.5 332.72 L373.5 333.92 L374.5 334.89 L375.5 335.53 L376.5 335.80 L377.5 335.70 L378.5 335.37 L379.5 334.84 L380.5 334.15 L381.5 333.34 L382.5 332.44 L383.5 331.49 L384.5 330.47 L385.5 329.15 L386.5 327.52 L387.5 325.63 L388.5 323.52 L389.5 321.21 L390.5 318.30 L391.5 314.83 L392.5 311.16 L393.5 307.60 L394.5 303.80 L395.5 299.99 L396.5 296.81 L397.5 294.35 L398.5 291.95 L399.5 289.85 L400.5 288.35 L401.5 287.71 L402.5 287.96 L403.5 288.78 L404.5 290.06 L405.5 291.68 L406.5 293.53 L407.5 295.50 L408.5 297.49 L409.5 299.37 L410.5 301.43 L411.5 303.75 L412.5 306.23 L413.5 308.80 L414.5 311.36 L415.5 313.83 L416.5 316.15 L417.5 318.47 L418.5 320.80 L419.5 323.08 L420.5 325.29 L421.5 327.39 L422.5 329.33 L423.5 331.26 L424.5 333.35 L425.5 335.33 L426.5 336.93 L427.5 337.87 L428.5 338.00 L429.5 338.00 L430.5 338.00 L431.5 338.00 L432.5 338.00 L433.5 338.00 L434.5 338.00 L435.5 338.00 L436.5 338.00 L437.5 338.00 L438.5 338.00 L439.5 338.00 L440.5 338.00 L441.5 338.00 L442.5 338.00 L443.5 338.00 L444.5 338.00 L445.5 338.00 L446.5 338.00 L447.5 338.00 L448.5 337.70 L449.5 335.61 L450.5 332.09 L451.5 327.86 L452.5 323.17 L453.5 316.52 L454.5 309.54 L455.5 303.06 L456.5 296.79 L457.5 293.28 L458.5 291.35 L459.5 289.74 L460.5 288.50 L461.5 287.67 L462.5 287.31 L463.5 287.64 L464.5 288.90 L465.5 290.90 L466.5 293.41 L467.5 296.24 L468.5 299.48 L469.5 304.48 L470.5 310.49 L471.5 316.42 L472.5 321.48 L473.5 326.69 L474.5 331.54 L475.5 335.19 L476.5 337.11 L477.5 338.00 L478.5 338.00 L479.5 338.00 L480.5 338.00 L481.5 338.00 L482.5 338.00 L483.5 338.00 L484.5 338.00 L485.5 338.00 L486.5 338.00 L487.5 338.00 L488.5 338.00 L489.5 338.00 L490.5 338.00 L491.5 338.00 L492.5 338.00 L493.5 338.00 L494.5 338.00 L495.5 338.00 L496.5 338.00 L497.5 338.00 L498.5 338.00 L499.5 338.00 L500.5 337.41 L501.5 333.35 L502.5 326.95 L503.5 320.00 L504.5 312.61 L505.5 303.24 L506.5 289.50 L507.5 267.11 L508.5 250.66 L509.5 245.51 L510.5 241.45 L511.5 238.49 L512.5 236.74 L513.5 236.34 L514.5 237.61 L515.5 240.42 L516.5 244.40 L517.5 249.21 L518.5 254.47 L519.5 259.85 L520.5 267.40 L521.5 277.48 L522.5 288.42 L523.5 298.60 L524.5 306.35 L525.5 310.65 L526.5 314.22 L527.5 317.59 L528.5 320.74 L529.5 323.65 L530.5 326.29 L531.5 328.64 L532.5 330.68 L533.5 332.39 L534.5 333.75 L535.5 334.74 L536.5 335.33 L537.5 335.50 L538.5 335.49 L539.5 335.45 L540.5 335.39 L541.5 335.31 L542.5 335.21 L543.5 335.09 L544.5 334.95 L545.5 334.78 L546.5 334.60 L547.5 334.31 L548.5 333.46 L549.5 332.07 L550.5 330.24 L551.5 328.10 L552.5 325.74 L553.5 323.29 L554.5 320.84 L555.5 318.15 L556.5 314.90 L557.5 311.37 L558.5 307.84 L559.5 304.60 L560.5 301.29 L561.5 297.62 L562.5 294.01 L563.5 290.84 L564.5 288.52 L565.5 287.43 L566.5 287.77 L567.5 289.18 L568.5 291.51 L569.5 294.61 L570.5 298.33 L571.5 302.53 L572.5 307.05 L573.5 311.75 L574.5 316.48 L575.5 321.09 L576.5 325.44 L577.5 329.37 L578.5 332.74 L579.5 335.39 L580.5 337.19 L581.5 337.98 L582.5 338.00 L582.5 338.0 Z" fill="#1fa0ee"/>
  <g font-family="Liberation Sans" font-size="6.6" fill="#7d8787" stroke="#7d8787" stroke-width="0.15" text-anchor="middle" id="xl"><text x="210.3" y="351.9">1</text><text x="222.6" y="351.9">2</text><text x="234.9" y="351.9">3</text><text x="247.2" y="351.9">4</text><text x="259.5" y="351.9">5</text><text x="271.8" y="351.9">6</text><text x="284.1" y="351.9">7</text><text x="296.4" y="351.9">8</text><text x="308.7" y="351.9">9</text><text x="321.0" y="351.9">10</text><text x="333.3" y="351.9">11</text><text x="345.6" y="351.9">12</text><text x="357.9" y="351.9">13</text><text x="370.2" y="351.9">14</text><text x="382.5" y="351.9">15</text><text x="394.8" y="351.9">16</text><text x="407.1" y="351.9">17</text><text x="419.4" y="351.9">18</text><text x="431.7" y="351.9">19</text><text x="444.0" y="351.9">20</text><text x="456.3" y="351.9">21</text><text x="468.6" y="351.9">22</text><text x="480.9" y="351.9">23</text><text x="493.2" y="351.9">24</text><text x="505.5" y="351.9">25</text><text x="517.8" y="351.9">26</text><text x="530.1" y="351.9">27</text><text x="542.4" y="351.9">28</text><text x="554.7" y="351.9">29</text><text x="567.0" y="351.9">30</text><text x="579.3" y="351.9">31</text></g>
  <text x="204" y="361.9" font-family="Liberation Sans" font-size="6.6" fill="#7d8787" stroke="#7d8787" stroke-width="0.15">Dec</text>
</svg>

<!-- legend -->
<div class="lg" style="left:285px;background:#1fa0ee"></div><div class="lgt" style="left:296px">Twitter</div>
<div class="lg" style="left:332px;background:#2479e6"></div><div class="lgt" style="left:343px">Facebook</div>
<div class="lg" style="left:388.5px;background:#e2405f"></div><div class="lgt" style="left:400px">Instagram</div>
<div class="lg" style="left:445px;background:#0f6aa6"></div><div class="lgt" style="left:456.5px">LinkedIn</div>

<!-- metrics box -->
<div class="a" style="left:191px;top:401px;width:391px;height:120px;border:1px solid #e6e9e9;border-radius:4px;background:#fff"></div>
<div class="a" style="left:205px;top:415.8px;font-size:6.5px;color:#5d6868">Audience Growth Metrics</div>
<div class="a" style="left:381.5px;top:415.8px;font-size:6.5px;color:#5d6868">Totals</div>
<div class="a" style="left:413.8px;top:415.8px;font-size:6.2px;color:#5d6868">% Change</div>
<div class="a" style="left:205px;top:427px;width:238px;height:1px;background:#e3e6e6"></div>
<div class="a" style="left:205px;top:436.9px;font-size:9.2px;color:#3a4545;letter-spacing:0.33px;-webkit-text-stroke:0.4px #3a4545">Total Followers</div>
<div class="a" style="left:372.8px;top:437.2px;font-size:10.4px;color:#3a4545;letter-spacing:0.15px;-webkit-text-stroke:0.45px #3a4545">2,500</div>
<div class="a" style="left:417.6px;top:437.2px;font-size:7.6px;color:#2bc1ad"><b style="font-size:8.4px">&#8599;</b>3.6%</div>
<div class="a" style="left:205px;top:453px;width:238px;height:2px;background:#c3c9c9"></div>
<div class="a" style="left:205px;top:462.3px;font-size:9.2px;color:#3a4545;letter-spacing:0.33px;-webkit-text-stroke:0.4px #3a4545">Total Net Follower Growth</div>
<div class="a" style="left:387.3px;top:462.4px;font-size:10.4px;color:#3a4545;letter-spacing:0.15px;-webkit-text-stroke:0.45px #3a4545">39</div>
<div class="a" style="left:205px;top:479px;width:238px;height:1px;background:#e3e6e6"></div>
<div class="a" style="left:469.5px;top:467.4px;font-size:7.85px;color:#5d6868">Total followers increased by</div>
<div class="a" style="left:491.3px;top:476.6px;font-size:26.5px;color:#2bc1ad;-webkit-text-stroke:0.6px #2bc1ad">3.6%</div>

<!-- right panel -->
<div id="rp">
  <div class="a" style="left:9px;top:14.2px;font-size:7.55px;color:#5d6868;border-bottom:1px dotted #d3d8d8;padding-bottom:0">Report uses <span style="color:#2f7fd6;font-weight:bold">multiple</span> time zones</div>
  <div class="rprow" style="top:36px"><div class="rplbl">Twitter</div></div>
  <div class="rprow" style="top:58px"><div class="rplbl">Facebook</div></div>
  <div class="rprow" style="top:80px"><div class="rplbl">Instagram</div></div>
  <div class="rprow" style="top:102px"><div class="rplbl">LinkedIn</div></div>
  <svg class="chev" style="left:141px;top:45px" viewBox="0 0 6 4"><path d="M0.5 0.5 L3 3 L5.5 0.5" stroke="#5d6868" fill="none" stroke-width="1"/></svg>
  <svg class="chev" style="left:141px;top:67px" viewBox="0 0 6 4"><path d="M0.5 0.5 L3 3 L5.5 0.5" stroke="#5d6868" fill="none" stroke-width="1"/></svg>
  <svg class="chev" style="left:141px;top:89px" viewBox="0 0 6 4"><path d="M0.5 0.5 L3 3 L5.5 0.5" stroke="#5d6868" fill="none" stroke-width="1"/></svg>
  <svg class="chev" style="left:141px;top:112px" viewBox="0 0 6 4"><path d="M0.5 0.5 L3 3 L5.5 0.5" stroke="#5d6868" fill="none" stroke-width="1"/></svg>
  <!-- twitter bird -->
  <svg class="a" style="left:11px;top:43px" width="9" height="8" viewBox="0 0 24 20"><path d="M24 2.4c-.9.4-1.8.6-2.8.8 1-.6 1.8-1.6 2.2-2.7-1 .6-2 1-3.1 1.2C19.3.7 18 0 16.6 0c-2.7 0-4.9 2.2-4.9 4.9 0 .4 0 .8.1 1.1C7.7 5.8 4.1 3.9 1.7.9c-.4.7-.7 1.6-.7 2.5 0 1.7.9 3.2 2.2 4.1-.8 0-1.6-.2-2.2-.6v.1c0 2.4 1.7 4.4 3.9 4.8-.4.1-.8.2-1.3.2-.3 0-.6 0-.9-.1.6 2 2.4 3.4 4.6 3.4-1.7 1.3-3.8 2.1-6.1 2.1-.4 0-.8 0-1.2-.1 2.2 1.4 4.8 2.2 7.5 2.2 9.1 0 14-7.5 14-14v-.6c1-.7 1.8-1.6 2.5-2.5z" fill="#1da1f2"/></svg>
  <!-- facebook -->
  <svg class="a" style="left:11px;top:65px" width="9" height="9" viewBox="0 0 20 20"><circle cx="10" cy="10" r="10" fill="#1877f2"/><path d="M13.5 12.9 L14 10 H11.2 V8.1 C11.2 7.3 11.6 6.6 12.8 6.6 H14.1 V4.1 C14.1 4.1 12.9 3.9 11.8 3.9 C9.5 3.9 8 5.3 8 7.8 V10 H5.5 V12.9 H8 V20 H11.2 V12.9Z" fill="#fff"/></svg>
  <!-- instagram -->
  <svg class="a" style="left:11px;top:87px" width="9" height="9" viewBox="0 0 20 20"><rect x="1.2" y="1.2" width="17.6" height="17.6" rx="5" stroke="#ea6d8b" stroke-width="2" fill="none"/><circle cx="10" cy="10" r="4" stroke="#ea6d8b" stroke-width="2" fill="none"/><circle cx="15" cy="5" r="1.1" fill="#ea6d8b"/></svg>
  <!-- linkedin -->
  <svg class="a" style="left:11px;top:110px" width="8.5" height="8.5" viewBox="0 0 20 20"><rect width="20" height="20" rx="2" fill="#2f8ac6"/><rect x="3.5" y="7.5" width="3" height="9" fill="#fff"/><circle cx="5" cy="4.8" r="1.7" fill="#fff"/><path d="M8.5 7.5 H11.3 V8.8 C11.8 8 12.8 7.3 14.2 7.3 C16.5 7.3 17 8.8 17 10.8 V16.5 H14 V11.5 C14 10.4 13.8 9.7 12.8 9.7 C11.8 9.7 11.5 10.4 11.5 11.5 V16.5 H8.5Z" fill="#fff"/></svg>
</div>

<!-- right rail -->
<div id="rr">
  <div class="a" style="left:3px;top:4.8px;width:26.4px;height:26.4px;border-radius:13.2px;background:#2a7bcd"></div>
  <svg class="a" style="left:10.5px;top:11.7px" width="12" height="12" viewBox="0 0 12 12"><path d="M6.3 2.4 H3.3 Q1.9 2.4 1.9 3.8 V9 Q1.9 10.4 3.3 10.4 H8.5 Q9.9 10.4 9.9 9 V6" stroke="#fff" stroke-width="1.15" fill="none"/><path d="M5.4 7 L10.2 1.8" stroke="#fff" stroke-width="1.3" stroke-linecap="round"/></svg>
  <svg class="a" style="left:11.5px;top:42.8px" width="10.5" height="11.8" viewBox="0 0 10 11"><path d="M5 0.5 C7.5 0.5 8.3 2.5 8.3 4.5 V7 L9.5 8.5 V9 H0.5 V8.5 L1.7 7 V4.5 C1.7 2.5 2.5 0.5 5 0.5Z" fill="#364141"/><path d="M3.8 9.5 Q5 11.5 6.2 9.5Z" fill="#364141"/></svg>
  <div class="a" style="left:18.9px;top:40.6px;width:6.6px;height:6.6px;border-radius:3.3px;background:#2f86de;border:1px solid #fff"></div>
  <svg class="a" style="left:11.3px;top:70.9px" width="9.6" height="9.6" viewBox="0 0 10 10"><circle cx="5" cy="5" r="5" fill="#364141"/><path d="M3.4 3.8 Q3.4 2.4 5 2.4 Q6.6 2.4 6.6 3.7 Q6.6 4.5 5.6 5 Q5 5.3 5 6.2" stroke="#fff" stroke-width="1.2" fill="none"/><circle cx="5" cy="7.7" r="0.75" fill="#fff"/></svg>
</div>
<!-- header buttons -->
<div class="btn" style="left:470px;width:153px"></div>
<svg class="a" style="left:477px;top:13.3px" width="8" height="8.8" viewBox="0 0 8 9"><rect x="0" y="1" width="8" height="8" rx="1" fill="#364141"/><rect x="1.5" y="0" width="1.3" height="2" fill="#364141"/><rect x="5.2" y="0" width="1.3" height="2" fill="#364141"/><rect x="1" y="3.4" width="6" height="0.7" fill="#f5f6f6"/><rect x="1" y="5.6" width="6" height="0.6" fill="#f5f6f6" opacity="0.6"/></svg>
<div class="a" style="left:490px;top:13.6px;font-size:7.6px;font-weight:bold;color:#364141">12/1/19 – 12/31/19</div>
<div class="a" style="left:557px;top:14.5px;font-size:6.1px;color:#6a7474">vs 11/1/19 – 11/30/19</div>
<div class="btn" style="left:627.3px;width:22.5px"></div>
<svg class="a" style="left:632px;top:15px" width="12" height="5" viewBox="0 0 12 5"><circle cx="2.6" cy="2.5" r="1.15" fill="#364141"/><circle cx="6" cy="2.5" r="1.15" fill="#364141"/><circle cx="9.4" cy="2.5" r="1.15" fill="#364141"/></svg>
<div class="btn" style="left:654px;width:49px"></div>
<svg class="a" style="left:661px;top:12px" width="9" height="10" viewBox="0 0 9 10"><path d="M4.5 7 V1 M2.3 3 L4.5 0.8 L6.7 3 M0.7 5 V9.3 H8.3 V5" stroke="#364141" stroke-width="1" fill="none"/></svg>
<div class="a" style="left:673.5px;top:13.3px;font-size:7.6px;font-weight:bold;color:#364141">Export</div>
<div class="a" style="left:708px;top:8.9px;width:47.3px;height:17.4px;border-radius:3px;background:#323d3d"></div>
<svg class="a" style="left:714px;top:13.5px" width="9" height="8" viewBox="0 0 9 8"><path d="M0 4 H6 M3.5 1.5 L6 4 L3.5 6.5 M8 0.5 V7.5" stroke="#fff" stroke-width="1.3" fill="none"/></svg>
<div class="a" style="left:727.5px;top:13.3px;font-size:7.6px;font-weight:bold;color:#fff">Filters</div>

<div class="a" style="left:169px;top:487px;width:631px;height:1px;background:#e6e8e8"></div>
<div class="a" style="left:169px;top:36px;width:596px;height:1px;background:#e3e6e6"></div>
</body></html>
